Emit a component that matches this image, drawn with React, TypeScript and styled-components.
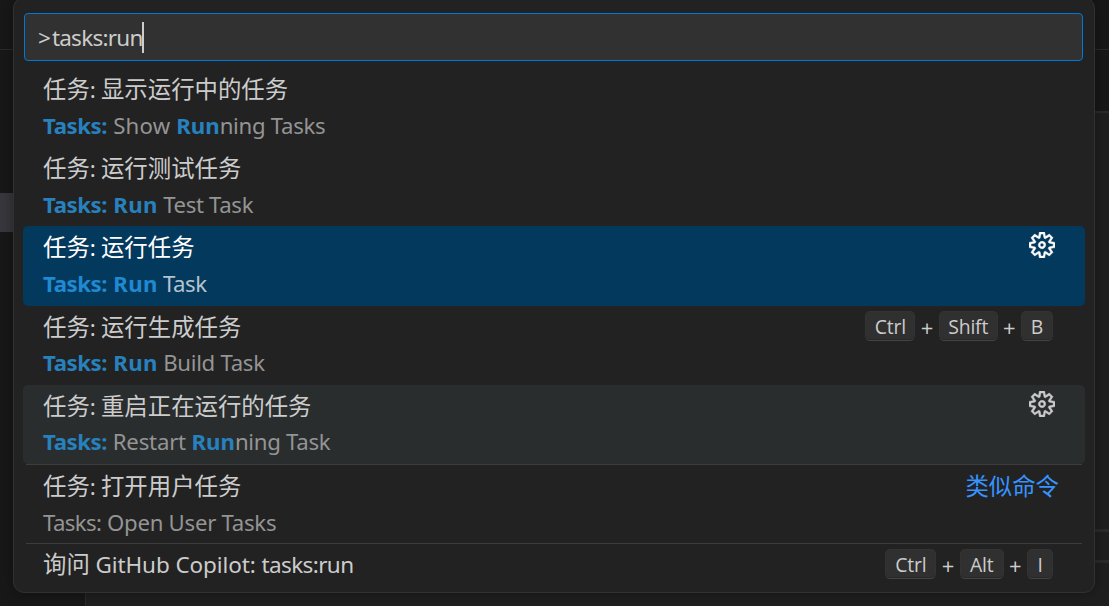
import React from 'react';
import styled, { createGlobalStyle } from 'styled-components';
import { VscSettingsGear } from 'react-icons/vsc';

const GlobalStyle = createGlobalStyle`
  * { box-sizing: border-box; }
  html, body { margin: 0; padding: 0; }
  body {
    background: #1f1f1f;
    overflow: hidden;
    font-family: "Segoe UI", "Noto Sans", "Noto Sans CJK SC", sans-serif;
  }
`;

const Workbench = styled.div`
  position: relative;
  width: 1109px;
  height: 606px;
  overflow: hidden;
  display: flex;
  background: #1f1f1f;
`;

const Sidebar = styled.div`
  width: 86px;
  display: flex;
  flex-direction: column;
  background: #181818;
  border-right: 1px solid #2b2b2b;
`;

const SidebarHeader = styled.div`
  height: 50px;
  border-bottom: 1px solid #2b2b2b;
`;

const SidebarSelection = styled.div`
  margin-top: 143px;
  height: 39px;
  background: #37373d;
`;

const Editor = styled.div`
  flex: 1;
  display: flex;
  flex-direction: column;
`;

const Band = styled.div<{ $h: number; $bg: string; $line: number }>`
  height: ${(p) => p.$h}px;
  background: ${(p) => p.$bg};
  border-bottom: ${(p) => p.$line}px solid #2b2b2b;
`;

const Palette = styled.div`
  position: absolute;
  top: -3px;
  left: 13px;
  width: 1082px;
  height: 596px;
  padding: 15px 9px 0;
  background: #222222;
  border: 1px solid #313131;
  border-radius: 11px;
  box-shadow: 0 0 14px rgba(0, 0, 0, 0.36);
`;

const Input = styled.div`
  display: flex;
  align-items: center;
  height: 48px;
  margin: 0 2px 0 1px;
  padding-left: 13px;
  background: #313131;
  border: 1px solid #0078d4;
  border-radius: 4px;
  color: #cccccc;
  font-size: 22.5px;
`;

const Caret = styled.span`
  width: 2px;
  height: 31px;
  margin-left: -1px;
  background: #cccccc;
`;

const List = styled.div`
  display: flex;
  flex-direction: column;
  margin-top: 7px;
`;

const Row = styled.div<{ $state?: 'focused' | 'hovered'; $short?: boolean }>`
  display: flex;
  justify-content: space-between;
  height: ${(p) => (p.$short ? 39.6 : 79.2)}px;
  padding: 0 32px 0 20px;
  border-radius: 5px;
  color: ${(p) => (p.$state === 'focused' ? '#ffffff' : '#cccccc')};
  background: ${(p) =>
    p.$state === 'focused' ? '#04395e' : p.$state === 'hovered' ? '#2a2d2e' : 'transparent'};
`;

const Separator = styled.div`
  height: 1px;
  margin: 0 3px -1px;
  background: #3c3c3c;
`;

const Lines = styled.div<{ $separated?: boolean }>`
  display: flex;
  flex-direction: column;
  padding-top: ${(p) => (p.$separated ? 3 : 2)}px;
`;

const Title = styled.div`
  height: 39.6px;
  line-height: 39.6px;
  font-size: 23.4px;
  white-space: pre;
`;

const Detail = styled.div<{ $focused?: boolean }>`
  height: 31px;
  line-height: 31px;
  font-size: 22.2px;
  white-space: pre;
  color: ${(p) => (p.$focused ? '#b4c4cf' : '#949494')};
  b {
    font-weight: 700;
    color: ${(p) => (p.$focused ? '#1f8ad2' : '#2781be')};
  }
`;

const Latin = styled.span<{ $track?: number }>`
  font-size: 22.5px;
  letter-spacing: ${(p) => p.$track ?? 0}px;
`;

const Track = styled.span<{ $track: number }>`
  letter-spacing: ${(p) => p.$track}px;
`;

const GearSlot = styled.div`
  display: flex;
  align-items: center;
  height: 38px;
  margin-right: -2px;
  svg { display: block; }
`;

const Keys = styled.div`
  display: flex;
  align-items: center;
  height: 41px;
  font-size: 22px;
  font-family: "Open Sans", sans-serif;
`;

const Plus = styled.span`
  width: 23.3px;
  text-align: center;
  padding-top: 2px;
`;

const Key = styled.kbd<{ $w: number }>`
  width: ${(p) => p.$w}px;
  height: 30px;
  line-height: 30px;
  text-align: center;
  font-family: inherit;
  font-size: 19.4px;
  letter-spacing: -0.2px;
  color: #cccccc;
  background: #303030;
  border: 1px solid #333333;
  border-bottom-color: #444444;
  border-radius: 5px;
  box-shadow: inset 0 -1px 0 #282828;
`;

const Category = styled.div`
  height: 45px;
  line-height: 45px;
  margin-right: -6px;
  font-size: 23.4px;
  color: #3794ff;
`;

type Part = [text: string, match: boolean, track: number];

interface Command {
  title: string;
  parts: Part[];
  state?: 'focused' | 'hovered';
  keys?: [string, number][];
  category?: string;
}

const tasks: Part = ['Tasks:', true, -0.4];
const spacedRun: Part = [' Run', true, 0.35];

const commands: Command[] = [
  { title: '显示运行中的任务', parts: [tasks, [' Show ', false, 0.2], ['Run', true, 0], ['ning Tasks', false, -0.3]] },
  { title: '运行测试任务', parts: [tasks, spacedRun, [' Test Task', false, -0.36]] },
  { title: '运行任务', state: 'focused', parts: [tasks, spacedRun, [' Task', false, -0.5]] },
  {
    title: '运行生成任务',
    parts: [tasks, spacedRun, [' Build Task', false, -0.3]],
    keys: [['Ctrl', 50], ['Shift', 59], ['B', 32]],
  },
  {
    title: '重启正在运行的任务',
    state: 'hovered',
    parts: [tasks, [' Restart ', false, -0.2], ['Run', true, 0], ['ning Task', false, -0.3]],
  },
  {
    title: '打开用户任务',
    parts: [['Tasks:', false, -0.6], [' Open User Tasks', false, -0.27]],
    category: '类似命令',
  },
];

function Keybinding({ keys }: { keys: [string, number][] }) {
  return (
    <Keys>
      {keys.map(([label, width], i) => (
        <React.Fragment key={label}>
          {i > 0 && <Plus>+</Plus>}
          <Key $w={width}>{label}</Key>
        </React.Fragment>
      ))}
    </Keys>
  );
}

export default function App() {
  return (
    <Workbench>
      <GlobalStyle />
      <Sidebar>
        <SidebarHeader />
        <SidebarSelection />
      </Sidebar>
      <Editor>
        <Band $h={50} $bg="#181818" $line={1} />
        <Band $h={63} $bg="#181818" $line={2} />
        <Band $h={419} $bg="#1f1f1f" $line={3} />
        <Band $h={31} $bg="#1f1f1f" $line={3} />
      </Editor>
      <Palette>
        <Input>
          <Track $track={1}>&gt;</Track>
          <Track $track={-0.75}>tasks:run</Track>
          <Caret />
        </Input>
        <List>
          {commands.map((c) => (
            <React.Fragment key={c.title}>
              {c.category && <Separator />}
              <Row $state={c.state}>
                <Lines $separated={!!c.category}>
                  <Title>
                    任务<Latin $track={-0.35}>: </Latin>
                    {c.title}
                  </Title>
                  <Detail $focused={c.state === 'focused'}>
                    {c.parts.map(([text, match, track]) => (
                      <Track key={text} $track={track}>
                        {match ? <b>{text}</b> : text}
                      </Track>
                    ))}
                  </Detail>
                </Lines>
                {c.state && (
                  <GearSlot>
                    <VscSettingsGear size={26} stroke="currentColor" strokeWidth={0.4} />
                  </GearSlot>
                )}
                {c.keys && <Keybinding keys={c.keys} />}
                {c.category && <Category>{c.category}</Category>}
              </Row>
            </React.Fragment>
          ))}
          <Separator />
          <Row $short>
            <Lines>
              <Title>
                询问<Latin $track={-0.1}> GitHub Copilot: </Latin>
                <Latin $track={-0.6}>tasks:run</Latin>
              </Title>
            </Lines>
            <Keybinding keys={[['Ctrl', 51], ['Alt', 44], ['I', 26]]} />
          </Row>
        </List>
      </Palette>
    </Workbench>
  );
}
